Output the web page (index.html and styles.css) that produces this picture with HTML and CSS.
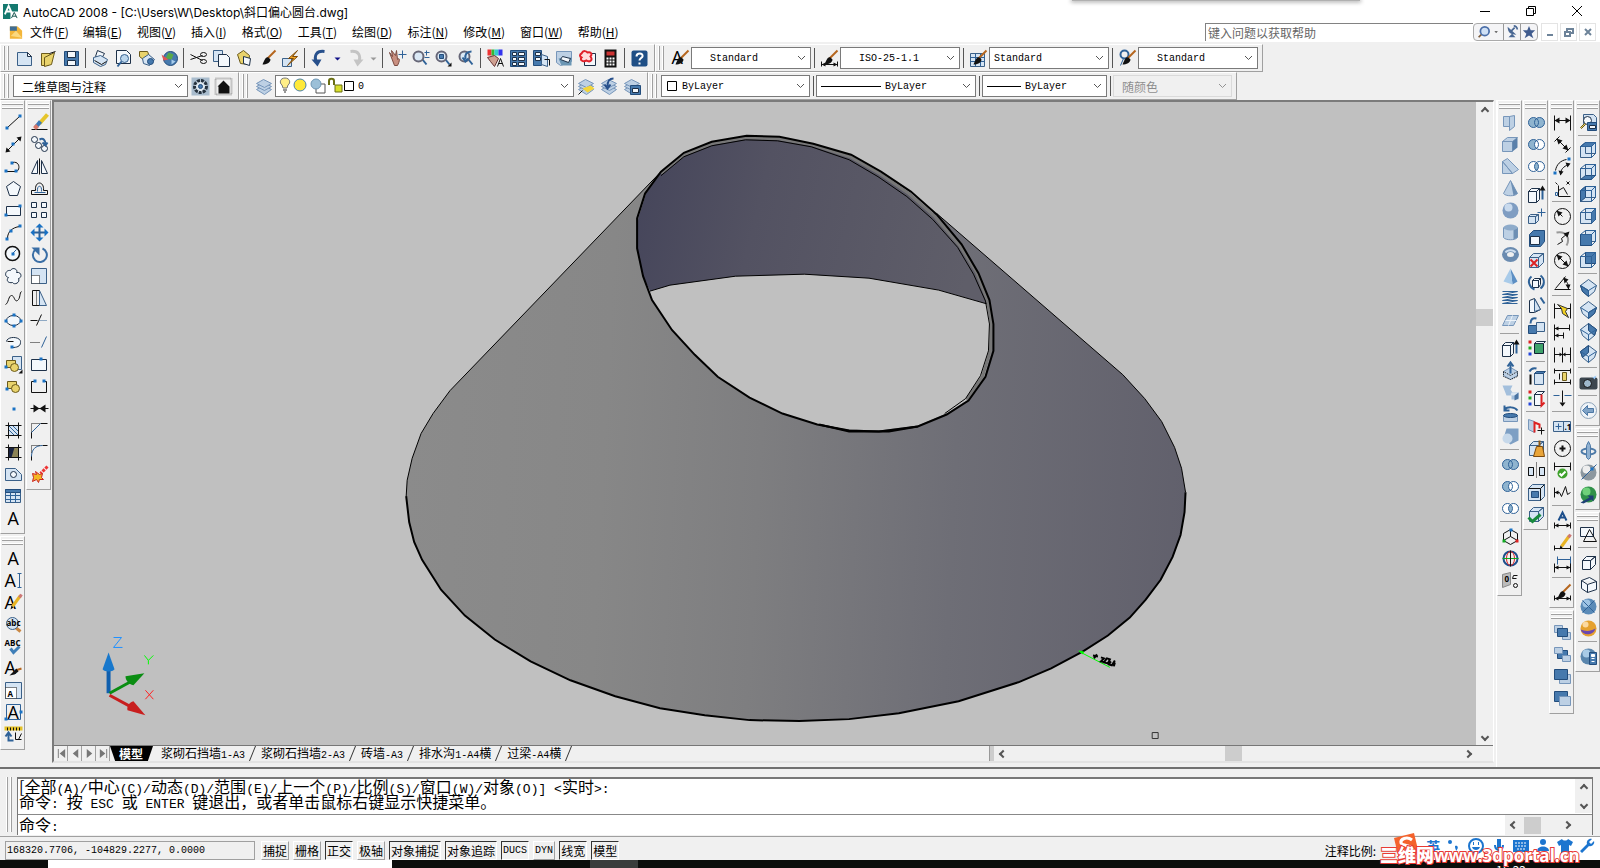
FILE: index.html
```html
<!DOCTYPE html>
<html lang="zh-CN">
<head>
    <meta charset="UTF-8">
    <meta content="width=device-width, initial-scale=1.0" name="viewport">
    <title>AutoCAD 2008</title>
    <link rel="stylesheet" href="styles.css">
</head>
<body>
<header class="titlebar">
    <svg class="app-icon" viewBox="0 0 16 16"><path d="M0 0h16v16H0z" fill="#14796f"/><path d="M2 11L6 2l4 9M3 8h6" stroke="#fff" stroke-width="2" fill="none"/><path d="M8 8h8v8H8z" fill="#fff"/><path d="M9 15l3-6 3 6M10 13h4" stroke="#0d4c46" fill="none"/></svg>
    <h1>AutoCAD 2008 - [C:\Users\W\Desktop\斜口偏心圆台.dwg]</h1>
    <div class="win-btns">
        <button aria-label="最小化"><svg viewBox="0 0 12 12"><path d="M1 6.5h10"/></svg></button>
        <button aria-label="还原"><svg viewBox="0 0 12 12"><path d="M1.500 3.500h7v7h-7zM3.500 3V1.500h7v7H9"/></svg></button>
        <button aria-label="关闭"><svg viewBox="0 0 12 12"><path d="M1 1l10 10M11 1L1 11"/></svg></button>
    </div>
    <div class="top-shadow"></div>
</header>
<nav class="menubar">
    <svg class="doc-icon" viewBox="0 0 16 16"><path d="M1 1h9l5 5v9H1z" fill="#f3b63a"/><path d="M1 1h8v5H1z" fill="#3f6d93"/><path d="M2 12l6-6 7 8z" fill="#fbd97f"/></svg>
    <button>文件(<u>F</u>)</button>
    <button>编辑(<u>E</u>)</button>
    <button>视图(<u>V</u>)</button>
    <button>插入(<u>I</u>)</button>
    <button>格式(<u>O</u>)</button>
    <button>工具(<u>T</u>)</button>
    <button>绘图(<u>D</u>)</button>
    <button>标注(<u>N</u>)</button>
    <button>修改(<u>M</u>)</button>
    <button>窗口(<u>W</u>)</button>
    <button>帮助(<u>H</u>)</button>
    <input class="help-box" type="text" aria-label="帮助" placeholder="键入问题以获取帮助">
    <div class="help-btns">
        <button class="wide" aria-label="搜索"><svg viewBox="0 0 28 16"><path d="M8 9l-5 5" stroke="#7a5a3a" stroke-width="2"/><circle cx="10" cy="7" r="5" fill="#cfe0f5" stroke="#4a6ea8" stroke-width="2"/><path d="M21 7h4l-2 2z" fill="#444"/></svg></button>
        <button aria-label="通讯中心"><svg viewBox="0 0 16 16"><path d="M3 2c0 7 4 9 10 9zM4 14h8l-4-4z" fill="#4a6894"/><path d="M7 7l4-4M10 1c2 0 4 2 4 4" stroke="#4a6894" stroke-width="2" fill="none"/></svg></button>
        <button aria-label="收藏夹"><svg viewBox="0 0 16 16"><path d="M8 1l2 5h5l-4 4 2 5-5-3-5 3 2-5-4-4h5z" fill="#3f5b8e"/></svg></button>
    </div>
    <div class="mdi-btns">
        <button aria-label="最小化图形"><svg viewBox="0 0 12 12"><path d="M3 9h6"/></svg></button>
        <button aria-label="还原图形"><svg viewBox="0 0 12 12"><path d="M2 6h5v4H2zM4 5V3h6v4H8"/></svg></button>
        <button aria-label="关闭图形"><svg viewBox="0 0 12 12"><path d="M3 3l6 6M9 3l-6 6"/></svg></button>
    </div>
</nav>

<div class="bars">
    <div class="bar-row">
        <div class="toolbar" data-icons="new open save | plot preview publish web | cut copy paste match blockedit | undo caret redo caret2 | pan zoomrt zoomwin zoomprev | props dc palettes sheet markup calc | help"></div>
        <div class="toolbar styles-bar">
            <span class="icon" data-icon="textstyle"></span>
            <div class="combo w120"><select class="pad" aria-label="文字样式"><option>Standard</option></select></div>
            <i class="sep"></i>
            <span class="icon" data-icon="dimstyle"></span>
            <div class="combo w120"><select class="pad" aria-label="标注样式"><option>ISO-25-1.1</option></select></div>
            <i class="sep"></i>
            <span class="icon" data-icon="tablestyle"></span>
            <div class="combo w120"><select aria-label="表格样式"><option>Standard</option></select></div>
            <i class="sep"></i>
            <span class="icon" data-icon="leaderstyle"></span>
            <div class="combo w120"><select class="pad" aria-label="多重引线样式"><option>Standard</option></select></div>
        </div>
    </div>
    <div class="bar-row">
        <div class="toolbar">
            <div class="combo w175"><select class="cn" aria-label="工作空间"><option>二维草图与注释</option></select></div>
            <span class="icon" data-icon="gear"></span>
            <span class="icon" data-icon="wshome"></span>
        </div>
        <div class="toolbar">
            <span class="icon" data-icon="layers"></span>
            <div class="combo w299">
                <svg class="layer-state" viewBox="0 0 76 18"><path d="M7 1c5 0 6 5 3 7l-1 3H5L4 8C1 6 2 1 7 1z" fill="#ffee88" stroke="#777"/><path d="M5 13h4M6 15h2" stroke="#333"/><circle cx="22" cy="8" r="6" fill="#ffe93a" stroke="#4b82ad"/><path d="M38 7h9v9h-9z" fill="#fff" stroke="#555"/><circle cx="38" cy="7" r="5" fill="#9cc0d8" stroke="#6f97b5"/><path d="M57 8h7v7h-7z" fill="#d8df2c" stroke="#6a6f14"/><path d="M51 8V4c0-3 5-3 5 0v4" fill="none" stroke="#6a6f14" stroke-width="2"/><path d="M66.500 4.500h9v9h-9z" fill="#fff" stroke="#000"/></svg>
                <select aria-label="图层"><option>0</option></select>
            </div>
            <span class="icon" data-icon="laycur"></span>
            <span class="icon" data-icon="layprev"></span>
            <span class="icon" data-icon="laystate"></span>
        </div>
        <div class="toolbar">
            <div class="combo w149">
                <svg class="swatch" viewBox="0 0 12 12"><path d="M1.500 1.500h9v9h-9z" fill="#fff" stroke="#000"/></svg>
                <select aria-label="颜色"><option>ByLayer</option></select>
            </div>
            <i class="sep"></i>
            <div class="combo w160"><span class="rule long"></span><select aria-label="线型"><option>ByLayer</option></select></div>
            <i class="sep"></i>
            <div class="combo w125"><span class="rule"></span><select aria-label="线宽"><option>ByLayer</option></select></div>
            <i class="sep"></i>
            <div class="combo w119 off"><select class="cn" aria-label="打印样式" disabled><option>随颜色</option></select></div>
        </div>
    </div>
</div>

<main class="workspace">
    <div class="dock">
        <div class="column">
            <div class="toolbar vert" data-icons="line xline pline polygon rect arc circle cloud spline ellipse earc insert block point hatch gradient region table mtext"></div>
            <div class="toolbar vert" data-icons="mtext dtext edittext findtext spell textbrush scaletext justify spacetrans"></div>
        </div>
        <div class="column">
            <div class="toolbar vert" data-icons="erase copyobj mirror offset array move rotate scale stretch trim extend breakpt break join chamfer fillet explode"></div>
        </div>
    </div>

    <div class="drawing">
        <div class="view">
            <svg class="model" viewBox="54 100 1423 646">
                <defs>
                    <linearGradient id="outer" gradientUnits="userSpaceOnUse" x1="405" y1="480" x2="1190" y2="520">
                        <stop offset="0" stop-color="#8b8b8b"/>
                        <stop offset=".25" stop-color="#878787"/>
                        <stop offset=".45" stop-color="#7e7e80"/>
                        <stop offset=".7" stop-color="#6e6e76"/>
                        <stop offset="1" stop-color="#61606c"/>
                    </linearGradient>
                    <linearGradient id="inner" gradientUnits="userSpaceOnUse" x1="640" y1="190" x2="970" y2="270">
                        <stop offset="0" stop-color="#46465b"/>
                        <stop offset=".35" stop-color="#535262"/>
                        <stop offset="1" stop-color="#5f5e69"/>
                    </linearGradient>
                </defs>
                <!-- cone body -->
                <path d="M661 170L449 390 432 413 420 433 411 458 406 480 405 496 408 522 413 542 421 560 440 590 464 616 494 640 530 662 570 681 615 697 660 709 705 716 750 721 800 722 850 720 900 714 960 702 1020 683 1053 669 1085 652 1110 636 1132 618 1148 600 1163 580 1175 557 1183 535 1187 512 1188 492 1184 468 1177 447 1164 421 1147 398 1125 374 938 212Z" fill="url(#outer)"/>
                <path d="M661 170L449 390 432 413 420 433 411 458 406 480 405 496M938 212L1125 374 1147 398 1164 421 1177 447 1184 468 1188 492" fill="none" stroke="#000"/>
                <path d="M405 496L408 522 413 542 421 560 440 590 464 616 494 640 530 662 570 681 615 697 660 709 705 716 750 721 800 722 850 720 900 714 960 702 1020 683 1053 669 1085 652 1110 636 1132 618 1148 600 1163 580 1175 557 1183 535 1187 512 1188 492" fill="none" stroke="#000" stroke-width="2"/>
                <!-- opening -->
                <path d="M747 135L780 136 814 143 852 155 882 172 912 192 938 215 963 245 980 273 991 299 993 323 993 350 986 376 970 399 948 413 919 425 880 430 850 429 818 424 783 413 750 397 718 376 695 354 672 329 652 299 643 275 637 247 638 217 646 192 661 171 684 152 712 141Z" fill="#c0c0c0"/>
                <path d="M650 290L670 284 736 275 805 273 870 277 940 289 989 303 980 273 963 245 938 215 912 192 882 172 852 155 814 143 780 136 747 135 712 141 684 152 661 171 646 192 638 217 637 247 643 275Z" fill="url(#inner)"/>
                <path d="M650 290L670 284 736 275 805 273 870 277 940 289 989 303" fill="none" stroke="#000"/>
                <!-- wall thickness along the rim -->
                <path d="M661 172L684 153 712 142 746 136 779 137 813 143 851 155 881 172 910 192 936 215 961 244 978 271 989 299 993 323 992 350 984 376 968 399" fill="none" stroke="#777" stroke-width="3"/>
                <path d="M661 174L684 155 712 144 746 138 778 139 812 145 850 158 879 175 908 195 934 218 959 246 975 273 987 300 991 323 990 350 982 375 967 398 946 413" fill="none" stroke="#000"/>
                <path d="M747 134L780 135 814 142 852 153 882 170 912 190 938 213 963 243 980 272 991 299 995 323 995 350 987 376 970 400 948 414 919 426 880 431 850 430 818 424 783 413 750 397 718 376 695 354 672 329 652 299 643 275 637 247 637 217 645 192 661 170 684 151 712 140Z" fill="none" stroke="#000" stroke-width="2"/>
                <path d="M820 424L850 431H890L919 426" fill="none" stroke="#000" stroke-width="2"/>
                <!-- diameter dimension -->
                <path d="M1081 652l31 16" stroke="#0f0"/>
                <path d="M1080 651l6 1-1 3z" fill="#0f0"/>
                <path d="M1095 656l5 1m-4 2l3-4m4 3l3 1-3 3 4 1m2-4l-3 4 4 1 2-4zm4 3l-2 3 3 1 3-5m-1 6l1-4" stroke="#000" stroke-width="2" fill="none"/>
                <!-- ucs icon -->
                <path d="M106 694V668" stroke="#0f5fae" stroke-width="4"/>
                <path d="M106 653l-6 17c2 3 10 3 12 0z" fill="#1878cc"/>
                <path d="M107 694l22-12" stroke="#0a8d12" stroke-width="3"/>
                <path d="M142 674l-19 3c0 4 3 8 8 9z" fill="#0a8d12"/>
                <path d="M107 696l22 12" stroke="#c81e1e" stroke-width="3"/>
                <path d="M143 716l-12-14c-4 1-7 5-6 9z" fill="#c81e1e"/>
                <path d="M111 638h8l-8 10h9" stroke="#1e90ff" fill="none"/>
                <path d="M142 656l4 5 5-5M146 661v4" stroke="#0f0" fill="none"/>
                <path d="M143 691l8 9M151 691l-8 9" stroke="#f22" fill="none"/>
                <path d="M1154.500 733.500h6v6h-6z" fill="none" stroke="#333"/>
            </svg>
            <div class="scroll-v">
                <button class="arrow up" aria-label="向上"></button>
                <span class="before"></span><span class="thumb"></span><span class="after"></span>
                <button class="arrow down" aria-label="向下"></button>
            </div>
        </div>
        <div class="layout-row">
            <div class="tab-nav">
                <button aria-label="第一个"><svg viewBox="0 0 12 12"><path d="M2 1h1v10H2zM10 1v10L4 6z"/></svg></button>
                <button aria-label="上一个"><svg viewBox="0 0 12 12"><path d="M9 1v10L3 6z"/></svg></button>
                <button aria-label="下一个"><svg viewBox="0 0 12 12"><path d="M3 1v10l6-5z"/></svg></button>
                <button aria-label="最后一个"><svg viewBox="0 0 12 12"><path d="M2 1v10l6-5zM9 1h1v10H9z"/></svg></button>
            </div>
            <button class="tab active">模型</button>
            <button class="tab">浆砌石挡墙<span>1-A3</span></button>
            <button class="tab">浆砌石挡墙<span>2-A3</span></button>
            <button class="tab">砖墙<span>-A3</span></button>
            <button class="tab">排水沟<span>1-A4</span>横</button>
            <button class="tab">过梁<span>-A4</span>横</button>
            <div class="scroll-h">
                <span class="splitter"></span>
                <button class="arrow left" aria-label="向左"></button>
                <span class="before"></span><span class="thumb"></span><span class="after"></span>
                <button class="arrow right" aria-label="向右"></button>
            </div>
        </div>
    </div>

    <div class="dock right">
        <div class="column">
            <div class="toolbar vert" data-icons="polysolid box wedge cone sphere cylinder torus pyramid helix plane | extrude presspull sweep revolve loft | union subtract intersect | ucs3d gizmo convert"></div>
        </div>
        <div class="column">
            <div class="toolbar vert" data-icons="union subtract intersect | extrude movface offface delface rotface tapface copyface colorface | copyedge coloredge | imprint clean separate shell check"></div>
        </div>
        <div class="column">
            <div class="toolbar vert" data-icons="dimlin dimali dimarc dimord | dimrad dimjog dimdia dimang | qdim dimbase dimcont dimspace dimbreak | tol cmark inspect jogline | dimedit dimtedit dimupd | dimstyle"></div>
            <div class="toolbar vert" data-icons="front back above under"></div>
        </div>
        <div class="column">
            <div class="toolbar vert" data-icons="views | vtop vbot vleft vright vfront vback | sw se ne nw | camera | prevview"></div>
            <div class="toolbar vert" data-icons="orbit forbit corbit"></div>
            <div class="toolbar vert" data-icons="wire2d | wire3d hidden realistic concept | vsmanager"></div>
        </div>
    </div>
</main>

<section class="command">
    <div class="cmd-box">
        <div class="history">
            <p>[全部<span>(A)/</span>中心<span>(C)/</span>动态<span>(D)/</span>范围<span>(E)/</span>上一个<span>(P)/</span>比例<span>(S)/</span>窗口<span>(W)/</span>对象<span>(O)] &lt;</span>实时<span>&gt;:</span></p>
            <p>命令<span>: </span>按<span> ESC </span>或<span> ENTER </span>键退出，或者单击鼠标右键显示快捷菜单。</p>
            <div class="scroll-s">
                <button class="arrow up" aria-label="向上"></button>
                <button class="arrow down" aria-label="向下"></button>
            </div>
        </div>
        <div class="prompt">
            <label for="cmd">命令<span>:</span></label>
            <input id="cmd" type="text">
            <div class="scroll-c">
                <button class="arrow left" aria-label="向左"></button>
                <span class="thumb"></span>
                <button class="arrow right" aria-label="向右"></button>
            </div>
        </div>
    </div>
</section>

<footer class="status">
    <output class="coords">168320.7706, -104829.2277, 0.0000</output>
    <button>捕捉</button>
    <button>栅格</button>
    <button class="on">正交</button>
    <button>极轴</button>
    <button class="on">对象捕捉</button>
    <button class="on">对象追踪</button>
    <button class="on en">DUCS</button>
    <button class="en">DYN</button>
    <button class="on">线宽</button>
    <button class="on">模型</button>
    <span class="scale">注释比例:</span>
    <div class="ime">
        <svg class="logo" viewBox="0 0 28 28"><path d="M2 6l20-5 5 21-20 5z" fill="#f4622c"/><path d="M20 8c-5-4-12-1-11 3 1 3 10 2 10 5s-7 5-11 1" stroke="#fff" stroke-width="3" fill="none"/></svg>
        <span>英</span>
        <svg viewBox="0 0 16 16"><circle cx="4" cy="4" r="2"/><path d="M9 8c3-1 4 2 1 5 0-2-1-2-1-5z"/></svg>
        <svg viewBox="0 0 16 16"><circle cx="8" cy="8" r="7" fill="none" stroke="#1c75cf" stroke-width="2"/><path d="M5 4h1v3H5zM10 4h1v3h-1zM4 9h8c-1 4-7 4-8 0z"/></svg>
        <svg viewBox="0 0 16 16"><path d="M6 1h4v9H6zM3 7h2c0 5 6 5 6 0h2c0 4-2 5-4 6v2H7v-2c-2-1-4-2-4-6z"/></svg>
        <svg viewBox="0 0 16 16"><path d="M0 2h16v12H0z"/><path d="M2 5h12M2 8h12M4 11h8" stroke="#fff" stroke-dasharray="2 1"/></svg>
        <svg viewBox="0 0 16 16"><circle cx="8" cy="4" r="3"/><path d="M2 13c0-6 12-6 12 0z"/></svg>
        <svg viewBox="0 0 16 16"><path d="M5 1c1 2 5 2 6 0l5 3-2 4-2-1v8H4V7L2 8 0 4z"/></svg>
        <svg viewBox="0 0 16 16"><path d="M1 13l7-7c-1-3 2-6 5-5l-3 3 2 2 3-3c1 3-2 6-5 5l-7 7z"/></svg>
        <strong class="mark"><b>三维网</b>www.3dportal.cn</strong>
    </div>
</footer>
<div class="taskbar"><span class="search"></span><span class="task"></span><time>15:22</time></div>
<script src="icons.js"></script>
</body>
</html>
```

FILE: styles.css
```css
* {
    box-sizing: border-box;
}

body {
    margin: 0;
    height: 100vh;
    display: flex;
    flex-direction: column;
    overflow: hidden;
    background: #f0f0f0;
    color: #000;
    font: 12px "Noto Sans CJK SC", sans-serif;
}

button {
    border: 0;
    padding: 0;
    margin: 0;
    background: none;
    color: inherit;
    font: inherit;
}

input, select {
    font: inherit;
}

/* title and menu */

.titlebar {
    height: 22px;
    flex: none;
    display: flex;
    align-items: center;
    background: #fff;
    position: relative;
}

.app-icon {
    width: 15px;
    height: 15px;
    margin: 0 5px 0 3px;
}

.titlebar h1 {
    margin: 0;
    font: 12px Inter, "Noto Sans CJK SC", sans-serif;
}

.win-btns {
    margin-left: auto;
    display: flex;
}

.win-btns button {
    width: 46px;
    height: 22px;
}

.win-btns svg {
    width: 12px;
    height: 12px;
    fill: none;
    stroke: #000;
    display: block;
    margin: auto;
}

.top-shadow {
    position: absolute;
    top: 0;
    left: 67%;
    width: 18%;
    height: 1px;
    background: #b0b0b0;
    box-shadow: 0 0 4px 1px #999;
}

.menubar {
    height: 20px;
    flex: none;
    display: flex;
    align-items: center;
    background: #fff;
    padding-right: 4px;
    white-space: nowrap;
}

.doc-icon {
    width: 14px;
    height: 15px;
    margin: 0 7px 0 9px;
}

.menubar > button {
    margin-right: 14px;
    line-height: 18px;
}

.menubar > button + button {
    margin-right: 15px;
}

.help-box {
    width: 268px;
    height: 18px;
    margin-left: auto;
    padding: 0 2px;
    border: 1px solid #828282;
    border-width: 1px 0 0 1px;
    background: #fff;
}

.help-box::placeholder {
    color: #666;
}

.help-btns {
    display: flex;
    border: 1px solid #aaa;
    border-radius: 4px;
    background: #f4f4f6;
    height: 18px;
}

.help-btns button {
    width: 17px;
    border-left: 1px solid #999;
}

.help-btns .wide {
    width: 29px;
    border: 0;
}

.help-btns svg {
    display: block;
    height: 14px;
    margin: auto;
}

.mdi-btns {
    display: flex;
    gap: 2px;
    margin-left: 3px;
}

.mdi-btns button {
    width: 17px;
    height: 18px;
    border: 1px solid #e4e4e4;
}

.mdi-btns svg {
    width: 12px;
    display: block;
    margin: auto;
    fill: none;
    stroke: #6d8399;
    stroke-width: 2;
}

/* toolbars */

.bars {
    flex: none;
    padding-top: 2px;
}

.bar-row {
    display: flex;
}

.toolbar {
    height: 28px;
    display: flex;
    align-items: center;
    padding: 0 4px 0 12px;
    border: 1px solid #fff;
    border-right-color: #a0a0a0;
    border-bottom-color: #a0a0a0;
    /* double grip line on the leading edge */
    background: linear-gradient(90deg, #fff 1px, #a0a0a0 1px 2px, transparent 2px 4px, #fff 4px 5px, #a0a0a0 5px 6px, transparent 6px) 2px 1px / 8px 24px no-repeat;
}

.toolbar .icon, .toolbar > button {
    flex: none;
    width: 23px;
    height: 22px;
    display: flex;
    align-items: center;
    justify-content: center;
}

.toolbar > .caret {
    width: 13px;
}

.toolbar svg {
    flex: none;
    width: 18px;
    height: 18px;
    overflow: visible;
}

.sep {
    flex: none;
    width: 1px;
    height: 20px;
    margin: 0 2px 0 3px;
    background: #555;
}

.combo {
    height: 22px;
    display: flex;
    align-items: center;
    border: 1px solid #7a7a7a;
    background: #fff url("data:image/svg+xml,%3Csvg xmlns='http://www.w3.org/2000/svg' viewBox='0 0 9 6'%3E%3Cpath d='M1 1l3.500 3.500L8 1' fill='none' stroke='%23555'/%3E%3C/svg%3E") right 4px center / 9px 6px no-repeat;
}

.combo select {
    appearance: none;
    flex: 1;
    min-width: 0;
    border: 0;
    padding: 0 4px;
    background: none;
    color: #000;
    font: 10px "Liberation Mono", monospace;
}

.combo select.pad {
    padding-left: 18px;
}

.combo select.cn {
    padding-left: 8px;
    font: 12px "Noto Sans CJK SC", sans-serif;
}

.combo.off {
    border-color: #ccc;
    opacity: .6;
    background-color: #f0f0f0;
}

.w119 { width: 119px; }
.w120 { width: 120px; }
.w125 { width: 125px; }
.w149 { width: 149px; }
.w160 { width: 160px; }
.w175 { width: 175px; }
.w299 { width: 299px; }

.toolbar .layer-state {
    width: 76px;
    height: 18px;
    margin-left: 2px;
}

.toolbar .swatch {
    width: 12px;
    height: 12px;
    margin-left: 4px;
}

.rule {
    width: 34px;
    height: 1px;
    margin-left: 4px;
    background: #000;
}

.rule.long {
    width: 60px;
}

.toolbar.vert {
    width: 25px;
    height: auto;
    flex-direction: column;
    padding: 10px 0 4px;
    margin-bottom: 2px;
    background: linear-gradient(#fff 1px, #a0a0a0 1px 2px, transparent 2px 4px, #fff 4px 5px, #a0a0a0 5px 6px, transparent 6px) 1px 2px / 21px 8px no-repeat;
}

.vert > button {
    width: 22px;
}

.vert .sep {
    width: 19px;
    height: 1px;
    margin: 2px 0 3px;
    background: #a0a0a0;
}

/* classes shared by the icon drawings */
.k { fill: none; stroke: #111; }
.b { fill: none; stroke: #2f6298; }
.t { stroke-width: 2; }
.l { fill: #d5e4f3; stroke: #3b6088; }
.s { fill: #bdd0e4; stroke: #7796ba; }
.w { fill: #f4f8fc; stroke: #1d3048; }
.m { fill: #4679ad; stroke: #234d7c; }
.g { fill: none; stroke: #999; }
.dot { stroke-dasharray: 1 1; }
.n { fill: #1a72c4; }
.x { fill: #111; }
.y { fill: #e9d36c; stroke: #6b5a1b; }
.ic-text { font: 18px "Open Sans", sans-serif; }
.ic-small { font: bold 8px "Open Sans", sans-serif; }

/* work area */

.workspace {
    flex: 1;
    min-height: 0;
    display: flex;
}

.dock {
    flex: none;
    display: flex;
    gap: 1px;
}

.dock.right {
    margin-left: 2px;
    border-left: 1px solid #fff;
}

.column {
    width: 25px;
}

.drawing {
    flex: 1;
    min-width: 0;
    margin: 0 0 4px 1px;
    display: flex;
    flex-direction: column;
    border: 2px solid #7b7b7b;
    border-right: 1px solid #fff;
    border-bottom: 2px solid #e3e3e3;
}

.view {
    flex: 1;
    min-height: 0;
    display: flex;
    border-bottom: 1px solid #777;
}

.model {
    flex: 1;
    min-width: 0;
    height: 100%;
    background: #c0c0c0;
}

.scroll-v {
    width: 17px;
    display: flex;
    flex-direction: column;
}

.thumb {
    flex: none;
    width: 17px;
    height: 17px;
    background: #cdcdcd;
}

.scroll-v .before {
    flex: 191;
}

.scroll-v .after {
    flex: 403;
}

.arrow {
    flex: none;
    width: 17px;
    height: 17px;
    display: flex;
    align-items: center;
    justify-content: center;
}

.arrow::before {
    content: "";
    width: 4px;
    height: 4px;
    border: solid #555;
    border-width: 2px 0 0 2px;
    transform: rotate(45deg);
}

.arrow.down::before {
    transform: rotate(225deg);
}

.arrow.left::before {
    transform: rotate(-45deg);
}

.arrow.right::before {
    transform: rotate(135deg);
}

.layout-row {
    height: 15px;
    flex: none;
    display: flex;
    white-space: nowrap;
}

.tab-nav {
    display: flex;
}

.tab-nav button {
    width: 14px;
    border-right: 1px solid #a0a0a0;
}

.tab-nav svg {
    width: 11px;
    height: 11px;
    display: block;
    margin-left: 2px;
    fill: #777;
}

.tab {
    padding: 0 8px;
    line-height: 14px;
    position: relative;
}

.tab span {
    font: 10px "Liberation Mono", monospace;
}

/* slanted divider overlapping both neighbours */
.tab::after {
    content: "";
    position: absolute;
    right: 0;
    top: 0;
    height: 15px;
    border-right: 1px solid #333;
    transform: skewX(-22deg);
}

.tab.active {
    padding: 0 10px 0 9px;
    background: #000;
    color: #fff;
    font-weight: bold;
    clip-path: polygon(0 0, 100% 0, 88% 100%, 12% 100%);
}

.scroll-h {
    width: 35%;
    margin-left: auto;
    display: flex;
    padding-right: 17px;
}

.scroll-h .splitter {
    width: 5px;
    background: #cdcdcd;
    border-left: 1px solid #999;
}

.scroll-h .before {
    flex: 213;
}

.scroll-h .after {
    flex: 217;
}

.scroll-h .arrow, .scroll-h .thumb {
    height: 15px;
}

/* command window */

.command {
    flex: none;
    height: 70px;
    padding: 8px 7px 3px 17px;
    border-top: 2px solid #707070;
    border-bottom: 1px solid #a0a0a0;
    background: linear-gradient(90deg, #fff 1px, #a0a0a0 1px 2px, transparent 2px 4px, #fff 4px 5px, #a0a0a0 5px 6px, transparent 6px) 6px 8px / 8px 55px no-repeat;
}

.cmd-box {
    border: 1px solid #777;
    border-width: 2px 1px 0 1px;
    background: #fff;
    font-size: 16px;
}

.cmd-box span {
    font: 13px "Liberation Mono", monospace;
    white-space: pre;
}

.history {
    height: 36px;
    position: relative;
    padding: 0 0 4px 1px;
    border-bottom: 1px solid #888;
}

.history p {
    margin: 0;
    height: 15px;
    line-height: 15px;
}

.scroll-s {
    position: absolute;
    top: 0;
    right: 0;
    background: #f0f0f0;
}

.prompt {
    height: 20px;
    display: flex;
    align-items: center;
    padding-left: 1px;
    line-height: 18px;
}

.prompt input {
    flex: 1;
    border: 0;
    height: 18px;
    background: none;
    outline: 0;
}

.scroll-c {
    width: 87px;
    height: 20px;
    padding-right: 17px;
    display: flex;
    align-items: center;
    justify-content: space-between;
    background: #f0f0f0;
}

.scroll-c .thumb {
    margin-right: 16px;
}

/* status bar */

.status {
    flex: none;
    height: 23px;
    display: flex;
    align-items: flex-end;
    gap: 4px;
    padding-left: 5px;
    white-space: nowrap;
}

.coords {
    width: 250px;
    height: 19px;
    margin-right: 2px;
    padding-left: 1px;
    border: 1px solid #a0a0a0;
    font: 10px/18px "Liberation Mono", monospace;
}

.status button {
    height: 19px;
    padding: 0 1px;
    border: 1px solid #fff;
    border-right-color: #a0a0a0;
    border-bottom-color: #a0a0a0;
    line-height: 18px;
}

.status .on {
    border-color: #333 #fff #fff #333;
}

.status .en {
    font: 10px "Liberation Mono", monospace;
}

.scale {
    margin-left: auto;
    line-height: 18px;
}

.ime {
    width: 220px;
    height: 23px;
    padding-right: 5px;
    display: flex;
    align-items: center;
    justify-content: space-between;
    background: linear-gradient(90deg, transparent 17px, #fff 17px);
    position: relative;
    color: #1c75cf;
}

.ime svg {
    width: 16px;
    height: 16px;
    fill: #1c75cf;
    margin-bottom: 5px;
}

.ime .logo {
    width: 28px;
    height: 28px;
    margin-left: 12px;
}

.ime > span {
    font-size: 14px;
    font-weight: bold;
    line-height: 14px;
    margin-bottom: 6px;
}

.mark {
    position: absolute;
    left: 0;
    bottom: -6px;
    font: bold 17px/20px "Open Sans", "Noto Sans CJK SC", sans-serif;
    color: #fff;
    -webkit-text-stroke: 2px #e83a34;
    paint-order: stroke fill;
}

.mark b {
    font-size: 18px;
}

.taskbar {
    flex: none;
    height: 8px;
    display: flex;
    overflow: hidden;
    background: #0b0e0c;
    color: #fff;
}

.taskbar .search {
    width: 344px;
    margin-left: 48px;
    background: #fff;
}

.taskbar .task {
    width: 48px;
    margin-left: 198px;
    background: #3a3d3c;
}

.taskbar time {
    margin: 3px 74px 0 auto;
    line-height: 14px;
}
```

FILE: icons.js
```js
// small blue grip square
const n = (x, y) => `<path class="n" d="M${x} ${y}h3v3h-3z"/>`;
const p = (cls, d) => `<path class="${cls}" d="${d}"/>`;
const c = (cls, x, y, r) => `<circle class="${cls}" cx="${x}" cy="${y}" r="${r}"/>`;
const e = (cls, x, y, rx, ry) => `<ellipse class="${cls}" cx="${x}" cy="${y}" rx="${rx}" ry="${ry}"/>`;
const A = '<text class="ic-text" x="3" y="15">A</text>';
const brush = '<path d="M17 1L9 9" stroke="#b5651d" stroke-width="2"/><path class="x" d="M10 8c-3-1-4 3-6 7 4 0 8-2 8-5z"/>';
const pencil = '<path d="M16 2L8 13" stroke="#e8b423" stroke-width="3"/><path d="M17 1l-2 3" stroke="#c77" stroke-width="3"/><path class="x" d="M6 16l1-4 2 2z"/>';

// solid primitives
const cube = p('l', 'M2 6h9v10H2zM2 6l4-4h10l-5 4zM11 6l5-4v9l-5 5z');
const face = {
    top: 'M1 5l5-4h10l-4 4z', bottom: 'M1 16l5-4h10l-4 4z', left: 'M1 5l5-4v11l-5 4z',
    right: 'M12 5l4-4v11l-4 4z', front: 'M1 5h11v11H1z', back: 'M6 1h10v11H6z'
};
const view = side => p('l', face.back + face.front) + p('m', face[side]) + p('b', face.top + face.right);
const iso = d => p('l', 'M9 0l8 6-2 6-6 5-6-5-2-6z') + p('m', d) + p('b', 'M1 6l8 5 8-5M9 11v6');
const dim = p('k', 'M1 8v9M17 8v9M1 12h16') + p('x', 'M1 12l4-2v4zM17 12l-4-2v4z');
const sheets = p('s', 'M1 12l7-4 8 4-7 5z') + p('s', 'M1 9l7-4 8 4-7 4z') + p('s', 'M1 6l7-4 8 4-7 4z');
const twoCircles = p('b', 'M6 4a5 5 0 1 0 0 10a5 5 0 1 0 0-10M12 4a5 5 0 1 0 0 10a5 5 0 1 0 0-10');
const lens = 'M9 5a5 5 0 0 1 0 8a5 5 0 0 1 0-8z';
const mag = p('b t', 'M11 10l4 5') + '<circle cx="7" cy="7" r="5" fill="#dbe9f6" stroke="#667" stroke-width="2"/>';
const ball = (a, b) => `<circle cx="9" cy="9" r="8" fill="${b}"/><circle cx="7" cy="6" r="4" fill="${a}"/>`;
const squares = (a, b, m) => p(a, 'M1 2h8v7H1z') + p(b, 'M9 9h8v7H9z') + p(m, 'M4 5h10v8H4z');

const icons = {
    new: p('l', 'M1 3h10l4 4v9H1z') + p('w', 'M11 3v4h4z'),
    open: p('y', 'M2 4h8l2 3-3 9H2z') + p('y', 'M5 8l10-5-3 12-7 2z') + p('k', 'M10 4l6-2'),
    save: p('m', 'M2 2h14v14H2z') + p('w', 'M5 2h8v6H5zM5 11h8v5H5z'),
    plot: p('w', 'M6 1l7 3-3 5-6-2z') + p('l', 'M2 8l7-2 7 4-2 5-5 2-7-4z') + p('k', 'M3 11l7 4 5-3'),
    preview: p('w', 'M2 1h10l4 4v9H2z') + '<circle cx="10" cy="9" r="4" fill="#bcd7ee" stroke="#37618f"/>' + p('b t', 'M7 12l-4 5'),
    publish: p('y', 'M2 2h8l2 5-5 4-5-4z') + p('l', 'M5 9l6-4 6 5-5 6-6-2z') + c('m', 13, 12, 3),
    web: c('m', 10, 9, 7) + '<path d="M8 3l5 2-2 5-6-1z" fill="#58a846"/><path d="M1 5l7 5-5 1z" fill="#d55"/><path d="M11 10l4 2-4 3z" fill="#a8cdec"/>',
    cut: p('k', 'M1 5l12 6M1 10l12-4') + '<ellipse class="k" cx="14" cy="12" rx="3" ry="2"/><ellipse class="k" cx="14" cy="5" rx="3" ry="2"/>',
    copy: p('l', 'M1 1h9v11H1z') + p('w', 'M6 5h8l3 3v9H6z'),
    paste: p('y', 'M2 5l6-4 6 5-1 9-8-1z') + p('w', 'M8 7l7 2-1 7-6-2z'),
    match: brush,
    blockedit: p('l', 'M1 9h9v8H1z') + '<path d="M16 1l-9 8h5l-6 7 10-9h-5z" fill="#f7a823" stroke="#7d4a08"/>',
    undo: '<path d="M14 2C6 1 3 6 6 13" fill="none" stroke="#27508c" stroke-width="3"/><path d="M1 10h10l-4 7z" fill="#27508c"/>',
    redo: '<path d="M4 2c8-1 11 4 8 11" fill="none" stroke="#c4c4c4" stroke-width="3"/><path d="M7 10h10l-6 7z" fill="#c4c4c4"/>',
    caret: '<path d="M6 8h6l-3 3z" fill="#118"/>',
    caret2: '<path d="M6 8h6l-3 3z" fill="#999"/>',
    pan: '<path d="M1 3l3 4-1-6 4 5 1-5 1 9c2-2 3 0 0 6H6z" fill="#c98f80" stroke="#7b4b42"/>' + p('b', 'M14 1v8M10 5h8'),
    zoomrt: mag + p('b', 'M13 3h5M15 1v5M13 8h5'),
    zoomwin: mag + p('m', 'M5 5h4v4H5z') + p('x', 'M17 17v-4l-4 4z'),
    zoomprev: mag + p('b t', 'M14 2C9 2 7 5 8 10M5 8l3 4 3-3'),
    props: '<path d="M1 0h4v6H1z" fill="#e33"/><path d="M5 0h3v6H5z" fill="#3b3"/><path d="M8 0h4v6H8z" fill="#3cc"/><path d="M12 0h4v6h-4z" fill="#33e"/><path d="M1 8l7-2 4 3-4 8-4-5z" fill="#cfa192" stroke="#633"/>' + p('k', 'M11 17l3-8 3 8M12 14h4'),
    dc: p('m', 'M1 1h16v16H1z') + p('w', 'M3 3h4v3H3zM9 3h6v3H9zM3 8h4v3H3zM9 8h6v3H9zM3 13h4v3H3zM9 13h6v3H9z'),
    palettes: p('m', 'M1 1h8v15H1z') + p('w', 'M3 3h5v3H3zM3 8h5v3H3z') + p('l', 'M9 5l6 2v10l-6-2z') + p('k', 'M12 10h5v6'),
    sheet: p('s', 'M1 2h15v10L5 16l-4-3z') + '<path d="M3 9c4-1 8 0 13-1v8H6z" fill="#6b96b4"/>' + p('w', 'M7 7l8 2-2 4-8-3z'),
    markup: p('w', 'M6 4h11v12H6z') + '<path d="M3 4c2-4 5-2 6-1 4-1 5 2 3 4 3 4-1 6-4 4-4 2-7-1-5-3-2-1-2-3 0-4z" fill="#fdd" stroke="#e0202a" stroke-width="2"/>',
    calc: p('x', 'M3 0h12v18H3z') + '<path d="M5 2h8v4H5z" fill="#c33"/><path d="M5 9h8M5 12h8M5 15h8" stroke="#fff" stroke-width="2" stroke-dasharray="2 1"/>',
    help: '<rect x="1" y="1" width="16" height="16" rx="2" fill="#1f4f86"/><path d="M6 7c0-4 7-4 6 0-1 2-3 2-3 4M9 13v2" fill="none" stroke="#fff" stroke-width="2"/>',
    textstyle: '<text class="ic-text" x="0" y="14">A</text>' + brush,
    dimstyle: p('k', 'M1 12v5M17 12v5M1 15h16') + p('x', 'M1 15l4-2v4zM17 15l-4-2v4z') + brush,
    tablestyle: p('l', 'M1 4h14v13H1z') + p('b', 'M1 8h14M1 12h14M6 4v13M11 4v13') + brush,
    leaderstyle: '<circle cx="6" cy="5" r="4" fill="none" stroke="#2f6298" stroke-width="2"/>' + p('b', 'M5 9L2 16') + brush,
    gear: '<path d="M0 0h18v18H0z" fill="#a9bccd"/><circle cx="9" cy="9" r="6" fill="#dfe8f0" stroke="#26323e" stroke-width="3" stroke-dasharray="3 1"/>' + c('m', 9, 9, 2),
    wshome: p('g dot t', 'M1 1h16v16H1z') + p('x', 'M3 9l6-6 6 6v7H4V9z'),
    layers: sheets,
    laycur: sheets + '<path d="M5 11l8-3 4 3-7 4z" fill="#f4d63a"/>' + p('k', 'M1 17l4-4'),
    layprev: sheets + '<path d="M13 1C8 1 7 4 7 9M4 7l3 4 3-4" stroke="#27508c" stroke-width="2" fill="none"/>',
    laystate: sheets + p('m', 'M7 8h10v9H7z') + p('w', 'M9 11h6v4H9z'),

    // draw
    line: p('k', 'M3 14L15 3') + n(1, 13) + n(14, 1),
    xline: p('k', 'M2 16L16 2') + p('x', 'M1 17l1-5 4 4zM17 1l-1 5-4-4z') + n(7, 7),
    pline: p('k', 'M2 14h9M8 5c8-2 8 9 3 9') + n(0, 12) + n(6, 4) + n(10, 12),
    polygon: p('w', 'M9 2l7 5-3 9H5L2 7z'),
    rect: p('w', 'M2 5h14v9H2z') + n(0, 12) + n(14, 3),
    arc: p('k', 'M3 15C3 8 8 4 15 3') + n(1, 14) + n(5, 6) + n(14, 1),
    circle: '<circle cx="8" cy="8" r="7" fill="#f4f8fc" stroke="#111" stroke-width="1.500"/>' + p('b', 'M8 8l4-4') + n(7, 7),
    cloud: p('w', 'M6 3c2-4 8-1 6 2 5-1 6 5 2 6 2 4-4 7-6 4-4 1-7-2-4-5C-1 9 1 2 6 3z'),
    spline: p('k', 'M1 15c3-1 3-9 6-9s3 7 6 5 2-8 4-9'),
    ellipse: e('w', 9, 9, 7, 5) + n(0, 8) + n(8, 2) + n(15, 8) + n(8, 13),
    earc: p('w', 'M2 8c1-6 15-5 14 1 0 4-4 5-8 5') + n(6, 12) + p('k', 'M9 8H3'),
    insert: p('l', 'M8 1h9v13H8z') + p('y', 'M2 5h9v7H2z') + c('y', 10, 12, 4) + n(0, 10) + p('x', 'M18 18v-4l-4 4z'),
    block: p('y', 'M3 4h9v7H3z') + c('y', 11, 11, 4) + n(1, 10),
    point: n(8, 8),
    hatch: p('l', 'M4 4h10v10H4z') + p('b', 'M4 8l6 6M4 4l10 10M8 4l6 6') + p('k', 'M1 4h16M1 14h16M4 1v16M14 1v16'),
    gradient: '<path d="M4 4h10v10H4z" fill="#8d8456"/><path d="M4 4h6L7 14H4z" fill="#1a2340"/>' + p('k', 'M1 4h16M1 14h16M4 1v16M14 1v16'),
    region: p('l', 'M1 3h10l6 6v6H1z') + c('w', 9, 9, 3),
    table: p('l', 'M1 2h15v13H1z') + p('m', 'M1 2h15v3H1z') + p('b', 'M1 8h15M1 12h15M6 5v10M11 5v10'),
    mtext: A,

    // text
    dtext: '<text class="ic-text" x="0" y="15">A</text>' + p('b', 'M15 2v14M13 2h4M13 16h4'),
    edittext: '<text class="ic-text" x="0" y="15">A</text>' + pencil,
    findtext: '<path d="M11 12l5 4" stroke="#c98743" stroke-width="3"/>' + c('l', 8, 8, 6) + '<text class="ic-small" x="2" y="10">abc</text>',
    spell: '<text class="ic-small" x="0" y="8">ABC</text><path d="M6 11l3 4 6-6" fill="none" stroke="#3f7fb8" stroke-width="3"/>',
    textbrush: '<text class="ic-text" x="0" y="14">A</text><path d="M17 9l-6 2" stroke="#b5651d" stroke-width="2"/><path class="x" d="M12 9l2 3-4 3-5 1z"/>',
    scaletext: p('l', 'M1 1h16v16H1z') + '<path d="M1 6h11v11H1z" fill="#fff"/>' + p('k dot', 'M1 6h11v11H1z') + '<text class="ic-small" x="3" y="15">A</text>',
    justify: p('b', 'M2 1h14v15H2z') + A + n(0, 14) + n(15, 7),
    spacetrans: '<path d="M0 1h18v4H0z" fill="#e3c027"/>' + p('k', 'M3 2v3M6 2v3M9 2v3M12 2v3M15 2v3M11 7v7h6M14 14l3-6') + p('b t', 'M4 8v7h5M1 11l3-4 3 4'),

    // modify
    erase: p('k', 'M1 16h16') + '<path d="M17 1L9 10" stroke="#e6c52b" stroke-width="4"/><path d="M10 8l-5 6" stroke="#3c7ab8" stroke-width="4"/><path d="M7 12l-3 3" stroke="#d97a6c" stroke-width="4"/>',
    copyobj: c('w', 4, 4, 3) + c('w', 8, 10, 3) + c('w', 14, 13, 3) + p('b t', 'M9 4c4-2 6 1 6 5M12 7l3 3 2-3'),
    mirror: p('w', 'M7 3v13H1zM11 3v13h6z') + p('k', 'M9 1v16'),
    offset: p('k', 'M1 15h16v-4h-4C14 1 4 1 5 11H1z') + p('b', 'M4 13h11M7 12C6 5 12 5 11 12'),
    array: p('w', 'M1 1h5v5H1zM11 1h5v5h-5zM1 11h5v5H1zM11 11h5v5h-5z'),
    move: p('b t', 'M9 2v14M2 9h14') + p('n', 'M9 0l4 4H5zM9 18l4-4H5zM0 9l4-4v8zM18 9l-4-4v8z'),
    rotate: '<path d="M5 4a7 7 0 1 0 7-1" fill="none" stroke="#3a6ea5" stroke-width="2"/><path d="M1 2h8v8z" fill="#3a6ea5"/>',
    scale: p('l', 'M1 1h15v15H1z') + '<path d="M1 8h8v8H1z" fill="#fff"/>' + p('k dot', 'M1 8h8v8H1z'),
    stretch: p('l', 'M9 1l7 15H9z') + p('k dot', 'M6 1v15') + p('k', 'M9 1H2v15h7'),
    trim: p('k', 'M0 9h7M6 14l5-11') + p('b dot', 'M9 9h8'),
    extend: p('k dot', 'M0 9h10') + p('b', 'M11 14l5-11'),
    breakpt: p('w', 'M1 4h15v11H1z') + n(9, 2),
    break: p('k', 'M4 4H1v11h15V4h-3') + n(3, 2) + n(12, 2),
    join: p('k', 'M0 9h18') + p('x', 'M3 5l6 4-6 4zM15 5L9 9l6 4z'),
    chamfer: p('k', 'M1 10v7M10 2h7') + p('b', 'M1 11l9-9') + p('k dot', 'M1 9V2h8'),
    fillet: p('k', 'M1 12v5M12 2h5') + p('b', 'M1 13C1 6 5 2 12 2') + p('k dot', 'M1 9V2h8'),
    explode: '<path d="M17 1l-7 7" stroke="#e33" stroke-width="3" stroke-dasharray="3 1"/><path d="M2 8l4 1-1-3 4 3 3-1-1 4 2 2-4 0-1 3-2-3-4 2 1-4z" fill="#f3b723" stroke="#c22"/>',

    // solids
    polysolid: p('s', 'M2 3h6v10H2zM8 3l5-1v11l-5 4z'),
    box: p('s', 'M1 6h10v10H1zM1 6l5-4h10l-5 4z') + '<path d="M11 6l5-4v10l-5 4z" fill="#5a80aa"/>',
    wedge: p('s', 'M1 4l10 12H1zM1 4l5-3 11 11-6 4z'),
    cone: p('s', 'M9 1l7 13c-2 3-12 3-14 0z') + '<path d="M9 1l7 13-4 2z" fill="#6d8fb4"/>',
    sphere: ball('#c9daed', '#7f9dc2'),
    cylinder: p('s', 'M2 4v10c2 3 12 3 14 0V4') + '<path d="M12 5h4v9l-4 2z" fill="#6d8fb4"/><ellipse cx="9" cy="4" rx="7" ry="3" fill="#8eabca"/>',
    torus: '<ellipse cx="9" cy="9" rx="6" ry="5" fill="none" stroke="#6a8bb0" stroke-width="5"/><path d="M4 7c2-3 8-3 10 0" stroke="#cfdff0" fill="none" stroke-width="2"/>',
    pyramid: '<path d="M9 1l7 13-5 3z" fill="#5c8fc4"/><path d="M9 1L2 14l9 3z" fill="#a9cbe9"/>',
    helix: p('b', 'M1 2h15L1 5h15L1 8h15L1 11h15L1 14h15'),
    plane: p('s', 'M1 14L6 4l11 0-5 10z') + '<path d="M4 9h11M7 14l4-10" stroke="#eef4fa"/>',
    extrude: p('w', 'M1 6h8v11H1zM1 6l3-3h8L9 6zM9 6l3-3v11l-3 3') + p('b t', 'M15 14V3') + p('x', 'M15 0l3 5h-6z'),
    presspull: p('s', 'M2 10l7-4 7 4v4l-7 4-7-4z') + p('k dot', 'M2 10l7 4 7-4v5l-7 3-7-3z') + p('b t', 'M9 12V3M6 5l3-4 3 4'),
    sweep: '<path d="M1 2h10l-2 4 2 3h6v7h-7v-4H5z" fill="#a3bfdc"/><path d="M10 9h7l-2 3H9z" fill="#dbe7f3"/><path d="M13 12l4-3v6l-4 2z" fill="#4a74a3"/>',
    revolve: p('s', 'M2 10h14v6H2z') + e('m', 9, 10, 7, 2) + p('b t', 'M16 5C13 1 6 1 3 4M3 0v5h5'),
    loft: '<path d="M5 1h12v12l-8 4-7-6z" fill="#7d9fc4"/><circle cx="6" cy="11" r="5" fill="#c6d8ea"/>',
    union: '<g fill="#8fb4cf"><circle cx="6" cy="9" r="5"/><circle cx="12" cy="9" r="5"/></g>' + twoCircles,
    subtract: '<circle cx="6" cy="9" r="5" fill="#8fb4cf"/>' + '<circle cx="12" cy="9" r="5" fill="#fff"/>' + twoCircles,
    intersect: '<g fill="#fff"><circle cx="6" cy="9" r="5"/><circle cx="12" cy="9" r="5"/></g>' + `<path d="${lens}" fill="#8fb4cf"/>` + twoCircles,
    ucs3d: p('k', 'M9 2l7 4v7l-7 4-7-4V6zM9 9L2 13M9 9l7 4M9 9V2') + n(8, 1) + '<path d="M14 12h3v3h-3z" fill="#d22"/><path d="M1 12h3v3H1z" fill="#1a2"/>',
    gizmo: '<circle cx="9" cy="9" r="7" fill="none" stroke="#1d4f8c" stroke-width="2"/><ellipse cx="9" cy="9" rx="4" ry="7" fill="none" stroke="#d22"/><path d="M1 9h16" stroke="#1a2"/>' + p('k', 'M9 1v16'),
    convert: '<path d="M1 3l8-2v12l-8 3z" fill="#bbb" stroke="#888"/><text class="ic-small" x="3" y="10">0</text>' + p('k', 'M16 4h-4l-1 3h4') + c('k', 14, 14, 2),

    // solid editing
    movface: p('l', 'M1 9h7v7H1zM1 9l2-2h8l-3 2zM8 9l3-2v6l-3 3z') + p('b', 'M14 1v8M10 5h8'),
    offface: p('m', 'M2 5l4-4h11v11l-4 5H2z') + p('w', 'M3 7h9v8H3z'),
    delface: cube + '<path d="M3 8l7 7M10 8l-7 7" stroke="#d22" stroke-width="2"/>',
    rotface: p('w', 'M5 7h6v7H5zM5 7l2-2h6l-2 2zM11 7l2-2v6l-2 3z') + p('b t', 'M4 3c-5 4-2 11 3 13M13 2c5 4 4 10 0 13'),
    tapface: p('w', 'M2 5l5-2 6 11-6 3H2z') + p('l', 'M7 3l6 11-6 2z') + p('b t', 'M17 8l-4-6'),
    copyface: p('m', 'M1 8h8v8H1z') + p('l', 'M9 5h8v9H9z') + p('b t', 'M9 1C5 0 3 2 3 6'),
    colorface: '<path d="M7 4h9v10H7z" fill="#3fa26b" stroke="#123"/><path d="M1 1h3v3H1z" fill="#d22"/><path d="M1 7h3v3H1z" fill="#2a2"/><path d="M1 13h3v3H1z" fill="#24d"/>' + p('w', 'M7 4l2-2h9l-2 2z'),
    copyedge: p('l', 'M7 6h9v11H7z') + p('m', 'M7 6l2-2h9l-2 2z') + p('k t', 'M3 7v10') + p('b t', 'M9 1C5 0 3 2 2 4'),
    coloredge: '<path d="M1 1h3v3H1z" fill="#d22"/><path d="M1 7h3v3H1z" fill="#2a2"/><path d="M1 13h3v3H1z" fill="#24d"/>' + p('w', 'M7 5h7v11H7zM7 5l3-3h7l-3 3z') + '<path d="M14 5v11l3-3" stroke="#d22" fill="none" stroke-width="2"/>',
    imprint: p('s', 'M1 2l6 2v11l-6-3z') + '<path d="M7 15V5l5 2v4" stroke="#d22" stroke-width="2" fill="none"/>' + p('k', 'M14 10v7M10 13h7'),
    clean: cube + '<path d="M12 1v7" stroke="#8a5a1b" stroke-width="2"/><path d="M9 7h6l2 10H6z" fill="#e9a53a" stroke="#7b4a0f"/>',
    separate: p('l', 'M1 6h5v8H1zM12 6h5v8h-5z') + p('k', 'M1 6h5v8H1zM12 6h5v8h-5z') + p('k dot', 'M9 1v16'),
    shell: p('l', 'M1 5l4-4h12v12l-4 4H1z') + p('m', 'M4 8h7v6H4z') + p('k', 'M1 5h12v12M13 5l4-4'),
    check: cube + '<path d="M1 12l4 4 8-7" fill="none" stroke="#188a3c" stroke-width="3"/>',

    // dimensions
    dimlin: p('k', 'M1 2v15M17 2v15M1 7h16') + p('x', 'M1 7l5-3v6zM17 7l-5-3v6z'),
    dimali: p('k', 'M1 6l5-5M12 17l5-5M4 4l10 10') + p('x', 'M3 3l6 2-4 4zM15 15l-6-2 4-4z'),
    dimarc: p('k', 'M2 13C3 7 7 3 13 2M7 17c0-5 3-8 8-10') + p('x', 'M12 5l5 1-3 4zM5 13l2 5 3-4z') + n(0, 14) + n(14, 0),
    dimord: p('k', 'M5 6v11h12M5 11l5-3 4 7M2 3l2 2M13 2l3 3M16 2l-3 3') + p('b', 'M2 13h2v3H2z'),
    dimrad: c('k', 9, 9, 8) + p('k', 'M9 9L4 4') + p('x', 'M3 3l6 2-4 4z'),
    dimjog: p('g t', 'M3 3c10-2 14 6 10 13') + p('k', 'M4 15l5-3-1-3 6-5') + p('x', 'M16 2l-2 6-4-4z'),
    dimdia: c('k', 9, 9, 8) + p('k', 'M4 4l10 10') + p('x', 'M3 3l6 2-4 4zM15 15l-6-2 4-4z'),
    dimang: p('k', 'M1 16h16M2 15L12 3M10 6c4 2 5 5 5 10') + p('x', 'M10 4l5 2-4 4zM15 16l-3-5h5z'),
    qdim: p('k', 'M1 2v15M17 2v15M1 7h16') + '<path d="M4 3l10 4-2 3 3 6-6-4-1-5z" fill="#f2d11f" stroke="#333"/>',
    dimbase: p('k', 'M1 1v16M1 5h15M16 1v6M1 12h9M10 9v6') + p('x', 'M1 5l4-2v4zM1 12l4-2v4z'),
    dimcont: p('k', 'M1 2v15M9 2v15M17 2v15M1 9h16') + p('x', 'M9 9L6 7v4zM9 9l3-2v4z'),
    dimspace: p('k', 'M1 1v5M17 1v5M1 3h16M1 12v5M17 12v5M1 15h16') + p('y', 'M9 5h4v8H9z') + p('k', 'M6 6v6'),
    dimbreak: p('k', 'M9 1v12') + p('b', 'M0 6h6M11 6h7') + p('x', 'M9 17l-3-4h6z'),
    tol: p('l', 'M0 4h17v10H0zM10 4v10') + p('b', 'M5 6v6M2 9h6') + '<text class="ic-small" x="11" y="12">.1</text>',
    cmark: c('k', 9, 9, 8) + p('k t', 'M9 6v6M6 9h6'),
    inspect: p('k', 'M1 1v8M17 1v8M1 5h16') + '<circle cx="9" cy="12" r="5" fill="#3da12a"/><path d="M6 12l2 2 4-4" stroke="#fff" stroke-width="2" fill="none"/>',
    jogline: p('k', 'M1 4v10M1 9h5l2 4 4-10 2 8 3-2') + p('x', 'M1 9l4-2v4z'),
    dimedit: p('k', 'M1 11v6M17 11v6M1 14h16') + p('x', 'M1 14l4-2v4zM17 14l-4-2v4z') + '<path d="M5 9l4-8 4 8M6 6h6" stroke="#1d4f8c" stroke-width="2" fill="none"/>',
    dimtedit: p('k', 'M1 12v5M17 12v5M1 15h16') + pencil,
    dimupd: p('b', 'M4 1v8M17 1v8M4 4h13') + dim,
    front: squares('s', 's', 'm'),
    back: p('m', 'M4 5h10v8H4z') + p('s', 'M1 2h8v6H1zM9 10h8v6H9z'),
    above: p('s', 'M6 7h11v9H6z') + p('m', 'M1 2h13v10H1z'),
    under: p('m', 'M1 2h13v10H1z') + p('s', 'M6 7h11v9H6z'),

    // views
    views: p('l', 'M4 1h10l3 3v6H4z') + c('w', 8, 7, 4) + p('y', 'M1 14l4-4 1 1-4 4z') + p('m', 'M8 9h9v8H8z') + p('w', 'M10 12h6v3h-6z'),
    vtop: view('top'), vbot: view('bottom'), vleft: view('left'),
    vright: view('right'), vfront: view('front'), vback: view('back'),
    sw: iso('M1 6l8 5v6l-6-5z'), se: iso('M17 6l-8 5v6l6-5z'), ne: iso('M9 0l8 6-2 6-6-5z'), nw: iso('M9 0L1 6l2 6 6-5z'),
    camera: '<rect x="0" y="4" width="18" height="12" rx="2" fill="#3c464f"/><circle cx="8" cy="10" r="4" fill="#9db7cc" stroke="#111"/><path d="M11 1l2 3 4-2-2 4" fill="#9cf"/>',
    prevview: '<circle cx="9" cy="9" r="8" fill="#eef3f8" stroke="#8da3b8"/><path d="M3 9l5-5v3h6v4H8v3z" fill="#7fa3c7" stroke="#4d78a5"/>',
    orbit: '<ellipse cx="9" cy="10" rx="7" ry="3" fill="none" stroke="#4f7ba8" stroke-width="2"/><path d="M7 4l2-4 2 4v12l-2 2-2-2z" fill="#8fb0d0" stroke="#4f7ba8"/>',
    forbit: ball('#eee', '#8c979f') + p('b', 'M2 16L17 1') + n(11, 4),
    corbit: ball('#6fd07a', '#30904a') + '<path d="M1 17l9-5-2-2h6v6l-2-2-8 4z" fill="#1e3f74"/>',
    wire2d: p('w', 'M1 2h13v9H1z') + p('k', 'M10 4l7 12H4z'),
    wire3d: p('w', 'M3 7h8v9H3zM3 7l4-4h9l-5 4zM11 7l5-4v8l-5 5'),
    hidden: p('w', 'M2 5l8-3 7 4v8l-9 3-6-4zM2 5l6 4 9-3M8 9v8'),
    realistic: ball('#9fc4e4', '#5b8bb8') + p('b', 'M3 3l12 12M15 3L3 15'),
    concept: '<circle cx="9" cy="9" r="8" fill="#e5a12f"/><path d="M1 10a8 8 0 0 0 15-1c-5 3-10 3-15 1z" fill="#6b47b0"/><circle cx="6" cy="5" r="3" fill="#fbd9a0"/>',
    vsmanager: ball('#a9cbe6', '#5a86ad') + p('m', 'M10 5h7v12h-7z') + '<path d="M12 7h3v2h-3zM12 11h3M12 14h3" fill="#fff" stroke="#fff"/>'
};

// half-pixel origin keeps the 1px strokes sharp
const svg = name => `<svg viewBox="-.5 -.5 18 18">${icons[name]}</svg>`;

document.querySelectorAll('[data-icon]').forEach(el => {
    el.innerHTML = svg(el.dataset.icon);
});

document.querySelectorAll('[data-icons]').forEach(bar => {
    bar.innerHTML = bar.dataset.icons.split(' ').map(name => {
        if (name === '|') return '<i class="sep"></i>';
        const cls = name.startsWith('caret') ? ' class="caret"' : '';
        return `<button${cls} aria-label="${name}">${svg(name)}</button>`;
    }).join('');
});
```
